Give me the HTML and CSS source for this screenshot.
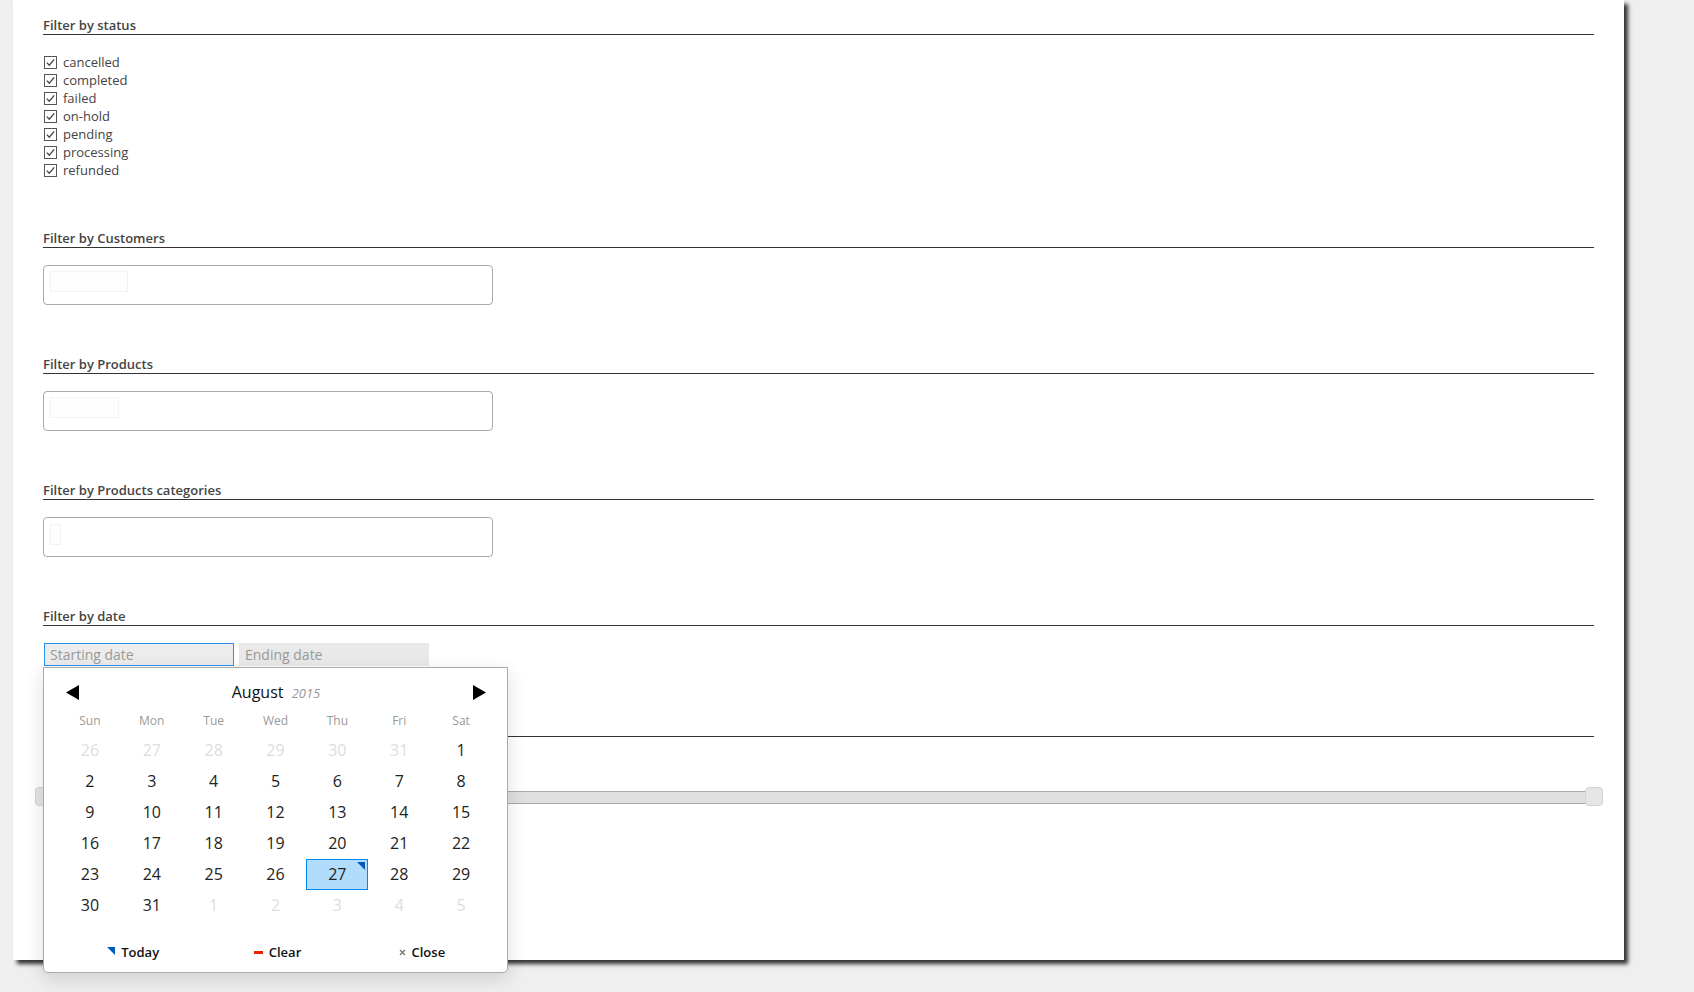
FILE: index.html
```html
<!DOCTYPE html>
<html lang="en">

<head>
    <meta charset="UTF-8">
    <meta name="viewport" content="width=device-width, initial-scale=1.0">
    <title>Orders filters</title>
    <link rel="stylesheet" href="styles.css">
</head>

<body>
    <div class="panel">

        <section class="filter">
            <h3 class="filter-title">Filter by status</h3>
            <ul class="status-list">
                <li><svg class="check" width="13" height="13" viewBox="0 0 13 13"><rect x="0.5" y="0.5" width="12" height="12" /><polyline points="2.8,6.6 5.3,9.2 10.2,3.4" /></svg>cancelled</li>
                <li><svg class="check" width="13" height="13" viewBox="0 0 13 13"><rect x="0.5" y="0.5" width="12" height="12" /><polyline points="2.8,6.6 5.3,9.2 10.2,3.4" /></svg>completed</li>
                <li><svg class="check" width="13" height="13" viewBox="0 0 13 13"><rect x="0.5" y="0.5" width="12" height="12" /><polyline points="2.8,6.6 5.3,9.2 10.2,3.4" /></svg>failed</li>
                <li><svg class="check" width="13" height="13" viewBox="0 0 13 13"><rect x="0.5" y="0.5" width="12" height="12" /><polyline points="2.8,6.6 5.3,9.2 10.2,3.4" /></svg>on-hold</li>
                <li><svg class="check" width="13" height="13" viewBox="0 0 13 13"><rect x="0.5" y="0.5" width="12" height="12" /><polyline points="2.8,6.6 5.3,9.2 10.2,3.4" /></svg>pending</li>
                <li><svg class="check" width="13" height="13" viewBox="0 0 13 13"><rect x="0.5" y="0.5" width="12" height="12" /><polyline points="2.8,6.6 5.3,9.2 10.2,3.4" /></svg>processing</li>
                <li><svg class="check" width="13" height="13" viewBox="0 0 13 13"><rect x="0.5" y="0.5" width="12" height="12" /><polyline points="2.8,6.6 5.3,9.2 10.2,3.4" /></svg>refunded</li>
            </ul>
        </section>

        <section class="filter">
            <h3 class="filter-title">Filter by Customers</h3>
            <div class="select-box"><span class="select-search search-customers"></span></div>
        </section>

        <section class="filter">
            <h3 class="filter-title">Filter by Products</h3>
            <div class="select-box"><span class="select-search search-products"></span></div>
        </section>

        <section class="filter">
            <h3 class="filter-title">Filter by Products categories</h3>
            <div class="select-box"><span class="select-search search-cats"></span></div>
        </section>

        <section class="filter filter-date">
            <h3 class="filter-title">Filter by date</h3>
            <div class="date-range">
                <input class="date-input focused" type="text" placeholder="Starting date">
                <input class="date-input" type="text" placeholder="Ending date">

                <div class="picker">
                    <div class="picker-header">
                        <svg class="nav" width="13" height="15" viewBox="0 0 13 15"><polygon points="13,0 13,15 0,7.5" /></svg>
                        <div class="picker-month">August <em>2015</em></div>
                        <svg class="nav" width="13" height="15" viewBox="0 0 13 15"><polygon points="0,0 0,15 13,7.5" /></svg>
                    </div>
                    <div class="weekdays">
                        <span>Sun</span><span>Mon</span><span>Tue</span><span>Wed</span><span>Thu</span><span>Fri</span><span>Sat</span>
                    </div>
                    <div class="days">
                        <span class="out">26</span><span class="out">27</span><span class="out">28</span><span class="out">29</span><span class="out">30</span><span class="out">31</span><span>1</span>
                        <span>2</span><span>3</span><span>4</span><span>5</span><span>6</span><span>7</span><span>8</span>
                        <span>9</span><span>10</span><span>11</span><span>12</span><span>13</span><span>14</span><span>15</span>
                        <span>16</span><span>17</span><span>18</span><span>19</span><span>20</span><span>21</span><span>22</span>
                        <span>23</span><span>24</span><span>25</span><span>26</span><span class="today">27</span><span>28</span><span>29</span>
                        <span>30</span><span>31</span><span class="out">1</span><span class="out">2</span><span class="out">3</span><span class="out">4</span><span class="out">5</span>
                    </div>
                    <div class="picker-footer">
                        <button class="pick-btn"><i class="ico-today"></i>Today</button>
                        <button class="pick-btn"><i class="ico-clear"></i>Clear</button>
                        <button class="pick-btn"><svg class="ico-close" width="7" height="7" viewBox="0 0 7 7"><path d="M1 1L6 6M6 1L1 6" /></svg>Close</button>
                    </div>
                </div>
            </div>
        </section>

        <!-- heading of this one sits under the open date picker -->
        <section class="filter">
            <h3 class="filter-title empty"></h3>
            <div class="slider">
                <span class="handle handle-min"></span>
                <span class="handle handle-max"></span>
            </div>
        </section>

    </div>
</body>

</html>
```

FILE: styles.css
```css
html {
    background-color: #efefef;
}

body {
    margin: 0;
    min-height: 992px;
    background-color: #efefef;
    font-family: "Open Sans", "DejaVu Sans", sans-serif;
    color: #444;
}

.panel {
    margin-left: 13px;
    width: 1611px;
    height: 960px;
    box-sizing: border-box;
    padding: 16px 30px 0;
    background-color: #fff;
    box-shadow: 4px 4px 4px #333;
}

.filter {
    margin-bottom: 50px;
}

.filter-date {
    margin-bottom: 52px;
}

.filter-title {
    margin: 0 0 17px;
    font-size: 13px;
    font-weight: 600;
    line-height: 18px;
    color: #444;
    border-bottom: 1px solid #333;
}

.filter-title.empty {
    height: 18px;
}

/* status checkboxes */
.status-list {
    list-style: none;
    margin: 0;
    padding: 1px 0 0;
}

.status-list li {
    display: flex;
    align-items: center;
    gap: 6px;
    height: 18px;
    font-size: 13px;
    padding-left: 1px;
}

.check rect {
    fill: none;
    stroke: #555;
}

.check polyline {
    fill: none;
    stroke: #444;
    stroke-width: 1.3;
}

/* select boxes */
.select-box {
    width: 450px;
    height: 40px;
    box-sizing: border-box;
    border: 1px solid #aaa;
    border-radius: 4px;
    padding: 5px 6px;
}

.select-search {
    display: block;
    height: 21px;
    box-sizing: border-box;
    border: 1px solid #f3f3f3;
    background-color: #fefefe;
}

.search-customers {
    width: 78px;
}

.search-products {
    width: 69px;
}

.search-cats {
    width: 11px;
    margin-top: 1px;
}

/* date range */
.date-range {
    position: relative;
    display: flex;
    gap: 5px;
}

.date-input {
    width: 190px;
    height: 23px;
    box-sizing: border-box;
    margin: 0;
    padding: 0 5px;
    border: 1px solid #e8e8e8;
    background-color: #e9e9e9;
    font-family: "Open Sans", "DejaVu Sans", sans-serif;
    font-size: 14px;
    color: #444;
    outline: none;
}

.date-input::placeholder {
    color: #9a9a9a;
}

.date-input.focused {
    border-color: #2b8ff0;
    background-color: #ececec;
    margin-left: 1px;
}

/* calendar popup */
.picker {
    position: absolute;
    top: 24px;
    left: 0;
    z-index: 5;
    width: 465px;
    box-sizing: border-box;
    padding: 12px 15px 8px;
    background-color: #fff;
    border: 1px solid #aaa;
    border-radius: 0 0 5px 5px;
    box-shadow: 0 6px 18px 1px rgba(0, 0, 0, 0.12);
}

.picker-header {
    display: flex;
    align-items: center;
    justify-content: space-between;
    height: 24px;
    padding: 0 6px 0 7px;
}

.nav polygon {
    fill: #000;
}

.picker-month {
    font-size: 16px;
    color: #111;
}

.picker-month em {
    margin-left: 4px;
    font-size: 13px;
    color: #999;
}

.weekdays,
.days {
    display: grid;
    grid-template-columns: repeat(7, 1fr);
    text-align: center;
}

.weekdays {
    margin-top: 7px;
    height: 20px;
    line-height: 20px;
    font-size: 12px;
    color: #999;
}

.days {
    margin-top: 4px;
    grid-auto-rows: 31px;
}

.days span {
    position: relative;
    box-sizing: border-box;
    border: 1px solid transparent;
    line-height: 29px;
    font-size: 16px;
    color: #222;
}

.days .out {
    color: #ddd;
}

.days .today {
    background-color: #b1dcfb;
    border-color: #0089ec;
}

.days .today::after {
    content: "";
    position: absolute;
    top: 2px;
    right: 2px;
    border-top: 8px solid #0059bc;
    border-left: 8px solid transparent;
}

.picker-footer {
    display: grid;
    grid-template-columns: repeat(3, 1fr);
    margin-top: 19px;
    height: 24px;
}

.pick-btn {
    display: flex;
    align-items: center;
    justify-content: center;
    gap: 6px;
    padding: 0 0 0 4px;
    border: 0;
    background: none;
    font-family: "Open Sans", "DejaVu Sans", sans-serif;
    font-size: 13px;
    font-weight: 600;
    color: #111;
}

.ico-today {
    margin-top: -3px;
    border-top: 8px solid #0059bc;
    border-left: 8px solid transparent;
}

.ico-clear {
    width: 9px;
    height: 3px;
    background-color: #e20;
}

.ico-close path {
    stroke: #777;
    stroke-width: 1.4;
}

/* price slider */
.slider {
    position: relative;
    margin-top: 54px;
    height: 13px;
    box-sizing: border-box;
    border: 1px solid #aaa;
    border-radius: 3px;
    background-color: #e0e0e0;
}

.handle {
    position: absolute;
    top: -5px;
    width: 18px;
    height: 19px;
    box-sizing: border-box;
    border: 1px solid #d3d3d3;
    border-radius: 4px;
    background-color: #e6e6e6;
}

.handle-min {
    left: -9px;
}

.handle-max {
    right: -10px;
}
```
